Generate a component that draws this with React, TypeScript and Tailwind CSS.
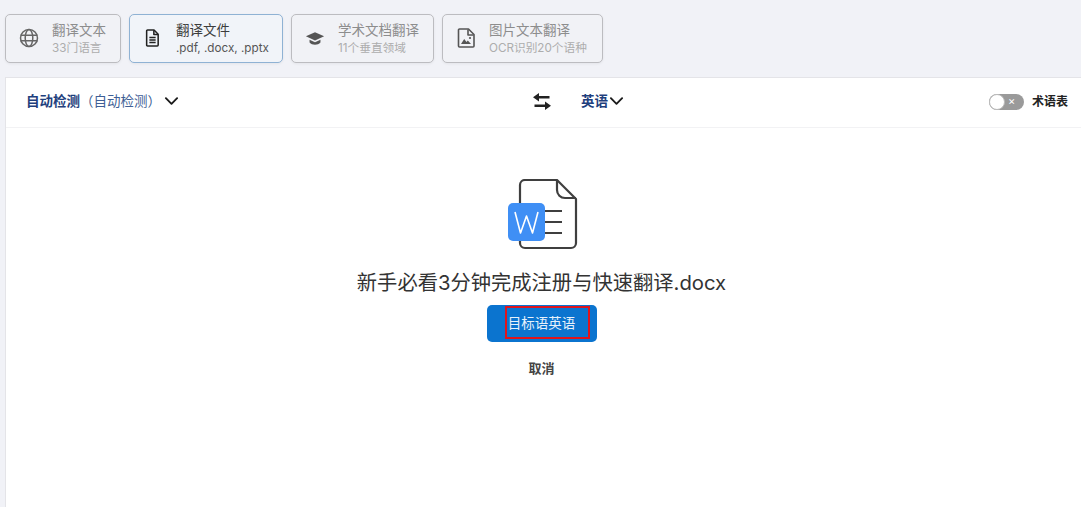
import React from "react";

const font = { fontFamily: '"Inter", "Noto Sans CJK SC", "Noto Sans", sans-serif' };

function Tab({ w, title, sub, active, icon }: { w: string; title: string; sub: string; active?: boolean; icon: React.ReactNode }) {
  return (
    <div className={`${w} h-[49px] shrink-0 flex items-center rounded-[5px] border ${active ? "border-[#8fb2d4] bg-[#f1f4f9]" : "border-[#bcbcc0] bg-[#f1f2f6]"} shadow-[0_1px_3px_rgba(0,0,0,0.06)]`}>
      <div className="w-[46px] shrink-0 flex justify-center pb-[1px] pr-[1px]">{icon}</div>
      <div className="flex flex-col">
        <span className={`text-[13.5px] leading-[18px] whitespace-nowrap ${active ? "text-[#3d3d3d]" : "text-[#8d8d8d]"}`}>{title}</span>
        <span className={`text-[11.7px] leading-[18px] whitespace-nowrap ${active ? "text-[#555]" : "text-[#adadad]"}`}>{sub}</span>
      </div>
    </div>
  );
}

const Chevron = ({ cls }: { cls: string }) => (
  <svg viewBox="0 0 16 10" className={cls} fill="none" stroke="#1a1a1a" strokeWidth="2" strokeLinecap="round" strokeLinejoin="round">
    <path d="M2 2l6 6 6-6" />
  </svg>
);

export default function App() {
  return (
    <div style={font} className="w-[1081px] h-[507px] overflow-hidden bg-[#f1f2f7] flex flex-col">
      <div className="flex gap-[8px] pt-[14px] pl-[5px] h-[77px] shrink-0">
        <Tab
          w="w-[116px]"
          title="翻译文本"
          sub="33门语言"
          icon={
            <svg viewBox="0 0 20 20" className="w-[20px] h-[20px]" fill="none" stroke="#666" strokeWidth="1.5">
              <circle cx="10" cy="10" r="8.5" />
              <ellipse cx="10" cy="10" rx="3.8" ry="8.5" />
              <path d="M1.5 7.3h17M1.5 12.7h17" />
            </svg>
          }
        />
        <Tab
          w="w-[154px]"
          active
          title="翻译文件"
          sub=".pdf, .docx, .pptx"
          icon={
            <svg viewBox="0 0 16 20" className="w-[15px] h-[18px]" fill="none" stroke="#222" strokeWidth="1.7" strokeLinejoin="round">
              <path d="M2.5 1.2h7.2l4.6 4.6v12a1 1 0 0 1-1 1H2.5a1 1 0 0 1-1-1v-15.6a1 1 0 0 1 1-1z" />
              <path d="M9.5 1.5v4.5h4.6M4.5 9.5h7M4.5 12.3h7M4.5 15h7" />
            </svg>
          }
        />
        <Tab
          w="w-[143px]"
          title="学术文档翻译"
          sub="11个垂直领域"
          icon={
            <svg viewBox="0 0 22 16" className="w-[20px] h-[15px]" fill="#555">
              <path d="M11 1L1 5.6l10 4.6 10-4.6z" />
              <path d="M5 9.4v3c1.5 1.6 3.6 2.4 6 2.4s4.5-.8 6-2.4v-3l-6 2.8z" />
            </svg>
          }
        />
        <Tab
          w="w-[161px]"
          title="图片文本翻译"
          sub="OCR识别20个语种"
          icon={
            <svg viewBox="0 0 18 20" className="w-[18px] h-[20px]" fill="none" stroke="#555" strokeWidth="1.6" strokeLinejoin="round">
              <path d="M2.5 1h9l5.5 5.5v11.5a1 1 0 0 1-1 1H2.5a1 1 0 0 1-1-1V2a1 1 0 0 1 1-1z" />
              <path d="M11 1.5v5.5h5.5" />
              <path d="M4 16l3.2-5 2.3 3 1.3-1.6L14 16z" fill="#555" stroke="none" />
              <circle cx="13" cy="10" r="1.1" fill="#555" stroke="none" />
            </svg>
          }
        />
      </div>

      <div className="ml-[5px] w-[1076px] flex-1 bg-white border-t border-l border-[#e4e4e8] flex flex-col">
        <div className="h-[50px] shrink-0 border-b border-[#f2f2f4] flex items-center pb-[3px]">
          <div className="w-[511px] pl-[20px] flex items-center">
            <span className="text-[13.5px] font-bold text-[#1f3f7d]">自动检测</span>
            <span className="text-[13.5px] text-[#3f5f96]">（自动检测）</span>
            <Chevron cls="w-[15px] h-[10px] ml-[3px]" />
          </div>
          <svg viewBox="0 0 18 17" className="w-[18px] h-[17px] ml-[16px]" fill="#222">
            <path d="M6 0L0 4.200 6 8.500V5.600h10.500V3H6zM12 8.500v2.900H1.500V14H12v3l6-4.300z" />
          </svg>
          <div className="ml-[30px] flex items-center">
            <span className="text-[13.5px] font-bold text-[#1f3f7d]">英语</span>
            <Chevron cls="w-[15px] h-[10px] ml-[1px]" />
          </div>
          <div className="ml-auto flex items-center pr-[13px] pt-[1px]">
            <div className="w-[35px] h-[16px] rounded-full bg-[#9a9a9a] flex items-center">
              <div className="w-[16px] h-[16px] rounded-full bg-white border border-[#bbb]"></div>
              <span className="text-[11px] leading-none text-white ml-[3px]">×</span>
            </div>
            <span className="ml-[8px] text-[12px] font-bold text-[#222]">术语表</span>
          </div>
        </div>

        <div className="flex flex-col items-center pt-[51px] pr-[4px]">
          <svg viewBox="0 0 72 72" className="w-[72px] h-[72px] mr-[-3px]" fill="none">
            <path d="M18 1h32l19 19v44a5 5 0 0 1-5 5H18a5 5 0 0 1-5-5V6a5 5 0 0 1 5-5z" stroke="#3f3f3f" strokeWidth="2.2" strokeLinejoin="round" />
            <path d="M50 1v10a8 8 0 0 0 8 8h11" stroke="#3f3f3f" strokeWidth="2.2" />
            <path d="M36 32h19M36 43h19M36 54h19" stroke="#3f3f3f" strokeWidth="2.2" />
            <rect x="1" y="24" width="37" height="38" rx="5" fill="#3f8ff5" />
            <path d="M8 33l5.500 21 6-17 6 17 5.500-21" stroke="#fff" strokeWidth="1.600" strokeLinejoin="round" />
          </svg>
          <div className="mt-[17px] text-[20.3px] leading-[30px] text-[#333] whitespace-nowrap">新手必看3分钟完成注册与快速翻译.docx</div>
          <div className="mt-[7px] relative w-[110px] h-[37px] rounded-[5px] bg-[#0b74cf] flex items-center justify-center">
            <span className="text-[13.5px] text-[#e6f1fb]">目标语英语</span>
            <div className="absolute left-[18px] top-[1px] w-[85px] h-[33px] border-[2px] border-[#e0141c]"></div>
          </div>
          <div className="mt-[11px] text-[13px] leading-[30px] font-bold text-[#444]">取消</div>
        </div>
      </div>
    </div>
  );
}
